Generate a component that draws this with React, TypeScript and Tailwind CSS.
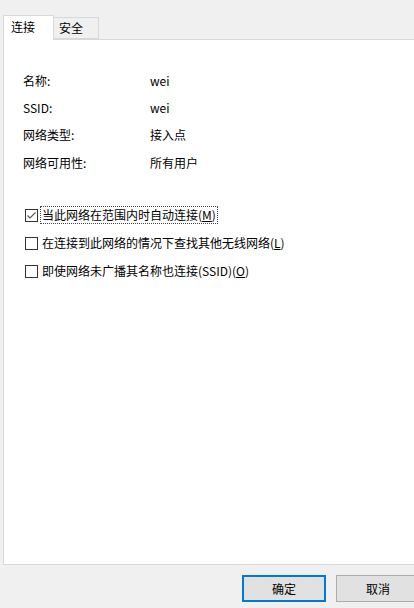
const font = { fontFamily: '"Microsoft YaHei UI", "Noto Sans CJK SC", "Liberation Sans", sans-serif' };

const rows = [
  ["名称:", "wei"],
  ["SSID:", "wei"],
  ["网络类型:", "接入点"],
  ["网络可用性:", "所有用户"],
];

function Box({ checked }: { checked?: boolean }) {
  return (
    <span className="flex h-[13px] w-[13px] shrink-0 items-center justify-center border border-[#333333] bg-white">
      {checked && (
        <svg width="11" height="11" viewBox="0 0 11 11">
          <path d="M1.5 5.5 L4 8 L9.5 2.5" fill="none" stroke="#555" strokeWidth="1.1" />
        </svg>
      )}
    </span>
  );
}

export default function App() {
  return (
    <div className="flex h-[608px] w-[414px] flex-col overflow-hidden bg-[#f0f0f0] text-[12px] leading-[16px] text-black" style={font}>
      <div className="flex items-end pl-[3px] pt-[15px]">
        <div className="relative z-10 -mb-px flex h-[25px] w-[51px] items-center border border-b-0 border-[#d9d9d9] bg-white pb-[2px] pl-[7px]">
          连接
        </div>
        <div className="flex h-[22px] w-[45px] items-center border border-l-0 border-[#d9d9d9] bg-[#f0f0f0] pl-[5px]">
          安全
        </div>
      </div>

      <div className="ml-[3px] flex h-[526px] flex-col border border-r-0 border-[#d9d9d9] bg-white pt-[27px]">
        {rows.map(([k, v]) => (
          <div key={k} className="flex h-[27.3px] items-center pl-[19px]">
            <span className="w-[127px]">{k}</span>
            <span>{v}</span>
          </div>
        ))}

        <div className="mt-[25px] flex flex-col pl-[21px]">
          <div className="flex h-[28px] items-center">
            <Box checked />
            <span className="ml-[2px] border border-dotted border-[#444] px-px leading-[16px]">
              当此网络在范围内时自动连接(<span className="underline">M</span>)
            </span>
          </div>
          <div className="flex h-[28px] items-center">
            <Box />
            <span className="ml-[4px]">
              在连接到此网络的情况下查找其他无线网络(<span className="underline">L</span>)
            </span>
          </div>
          <div className="flex h-[28px] items-center">
            <Box />
            <span className="ml-[4px]">
              即使网络未广播其名称也连接(SSID)(<span className="underline">O</span>)
            </span>
          </div>
        </div>
      </div>

      <div className="mt-[10px] flex pl-[242px]">
        <button className="flex h-[27px] w-[84px] shrink-0 items-center justify-center border-2 border-[#0078d7] bg-[#e1e1e1]">
          确定
        </button>
        <button className="ml-[10px] flex h-[27px] w-[84px] shrink-0 items-center justify-center border border-[#adadad] bg-[#e1e1e1]">
          取消
        </button>
      </div>
    </div>
  );
}
